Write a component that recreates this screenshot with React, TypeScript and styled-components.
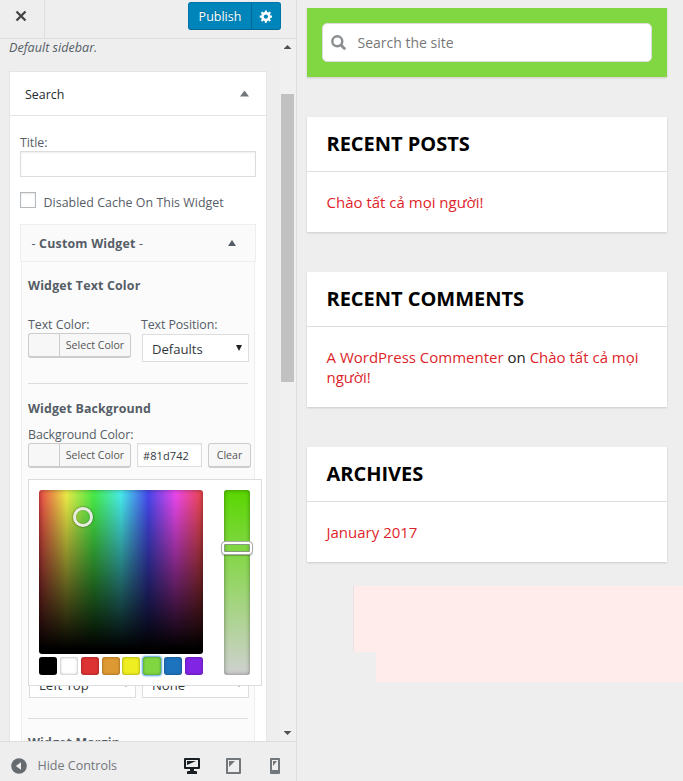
import React from 'react';
import styled, { createGlobalStyle } from 'styled-components';

const Global = createGlobalStyle`
  * { box-sizing: border-box; }
  body {
    margin: 0;
    background: #eee;
    font-family: "Open Sans", "Noto Sans", sans-serif;
    overflow: hidden;
  }
`;

const Page = styled.div`
  display: flex;
  width: 683px;
  height: 781px;
  background: #eee;
`;

const Sidebar = styled.aside`
  display: flex;
  flex-direction: column;
  flex: none;
  width: 297px;
  height: 781px;
  border-right: 1px solid #ddd;
  color: #555d66;
  font-size: 12.4px;
  line-height: 16px;
  white-space: nowrap;
`;

const TopBar = styled.header`
  display: flex;
  justify-content: space-between;
  height: 39px;
  flex: none;
  border-bottom: 1px solid #ddd;
  padding-right: 15px;
`;

const CloseButton = styled.div`
  display: flex;
  align-items: center;
  justify-content: center;
  width: 45px;
  height: 38px;
  padding: 0 3px 6px 0;
  border-right: 1px solid #ddd;
`;

const PublishGroup = styled.div`
  display: flex;
  width: 93px;
  height: 28px;
  margin-top: 2px;
  border: 1px solid #0073aa;
  border-bottom-color: #006799;
  border-radius: 3px;
  background: #0085ba;
  color: #fff;
  overflow: hidden;
`;

const PublishLabel = styled.div`
  width: 63px;
  border-right: 1px solid #006799;
  text-align: center;
  font-size: 12.5px;
  font-weight: 500;
  line-height: 27px;
  text-shadow: 0 -1px 1px #006799;
`;

const GearCell = styled.div`
  display: flex;
  flex: 1;
  align-items: center;
  justify-content: center;
  padding-top: 1px;
`;

const ScrollArea = styled.div`
  display: flex;
  flex: none;
  height: 702px;
  overflow: hidden;
`;

const Panel = styled.div`
  width: 280px;
  padding-left: 9px;
  overflow: hidden;
`;

const Description = styled.div`
  height: 16px;
  font-style: italic;
  font-size: 12.6px;
  line-height: 18px;
`;

const ScrollBar = styled.div`
  display: flex;
  flex-direction: column;
  align-items: center;
  width: 16px;
  padding: 6px 2px 6px 1px;
  background: #f0f0f0;
`;

const Thumb = styled.div`
  width: 13px;
  height: 288px;
  margin: 45px 0 auto;
  background: #c1c1c1;
`;

const WidgetCard = styled.section`
  width: 258px;
  height: 900px;
  margin-top: 16px;
  border: 1px solid #e5e5e5;
  background: #fff;
`;

const WidgetHeader = styled.div`
  display: flex;
  align-items: center;
  justify-content: space-between;
  height: 44px;
  padding: 0 17px 0 15px;
  border-bottom: 1px solid #e5e5e5;
  color: #23282d;
  font-weight: 500;
`;

const Triangle = styled.i<{ $down?: boolean; $w: number; $h: number; $color: string }>`
  flex: none;
  width: ${p => p.$w}px;
  height: ${p => p.$h}px;
  background: ${p => p.$color};
  clip-path: ${p => (p.$down ? 'polygon(0 0, 100% 0, 50% 100%)' : 'polygon(50% 0, 100% 100%, 0 100%)')};
`;

const WidgetBody = styled.div`
  padding: 18px 10px 0;
`;

const Label = styled.div<{ $ls?: number; $mt?: number; $bold?: boolean }>`
  height: 16px;
  margin-top: ${p => p.$mt ?? 0}px;
  line-height: 18px;
  letter-spacing: ${p => p.$ls ?? 0}px;
  font-weight: ${p => (p.$bold ? 700 : 400)};
`;

const HeaderLabel = styled(Label)`
  font-weight: inherit;
`;

const TitleInput = styled.div`
  height: 26px;
  margin-top: 1px;
  border: 1px solid #ddd;
  background: #fff;
  box-shadow: inset 0 1px 2px rgba(0, 0, 0, 0.07);
`;

const CheckRow = styled.div`
  display: flex;
  gap: 7.5px;
  height: 18px;
  margin-top: 15px;
`;

const Checkbox = styled.div`
  flex: none;
  width: 16px;
  height: 16px;
  border: 1px solid #b4b9be;
  background: #fff;
  box-shadow: inset 0 1px 2px rgba(0, 0, 0, 0.1);
`;

const GroupHeader = styled.div`
  display: flex;
  align-items: center;
  justify-content: space-between;
  height: 38px;
  margin-top: 14px;
  padding: 0 19px 0 10.5px;
  border: 1px solid #eee;
  background: #fafafa;
`;

const GroupBody = styled.div`
  height: 600px;
  margin: 0 1px;
  padding: 15px 6px 0;
  border: solid #eee;
  border-width: 0 1px;
  background: #fbfbfb;
`;

const Columns = styled.div<{ $mt: number }>`
  display: grid;
  grid-template-columns: 113px 108px;
  margin-top: ${p => p.$mt}px;
`;

const Rule = styled.div<{ $mt: number }>`
  width: 220px;
  height: 1px;
  margin-top: ${p => p.$mt}px;
  background: #ddd;
`;

const ButtonRow = styled.div`
  display: flex;
  gap: 6px;
  margin-top: 1px;
`;

const SmallButton = styled.div<{ $w: number }>`
  display: flex;
  flex: none;
  width: ${p => p.$w}px;
  height: 25px;
  border: 1px solid #ccc;
  border-bottom-width: 2px;
  border-radius: 3px;
  background: #f7f7f7;
  color: #555;
  font-size: 10.6px;
  line-height: 22px;
`;

const Swatch = styled.div`
  width: 31px;
  border-right: 1px solid #ccc;
`;

const ButtonText = styled.div`
  flex: 1;
  text-align: center;
`;

const HexInput = styled.div`
  flex: none;
  width: 65px;
  height: 24px;
  padding-left: 5px;
  border: 1px solid #ddd;
  background: #fff;
  box-shadow: inset 0 1px 2px rgba(0, 0, 0, 0.07);
  color: #32373c;
  font-size: 11px;
  line-height: 23px;
  letter-spacing: 0.1px;
`;

const SelectBox = styled.div`
  display: flex;
  justify-content: space-between;
  width: 107px;
  height: 28px;
  margin: 2px 0 0 1px;
  padding: 0 6px 0 9px;
  border: 1px solid #ddd;
  background: #fff;
  color: #32373c;
  font-size: 13.1px;
  line-height: 28px;
`;

const SelectArrow = styled(Triangle)`
  margin-top: 10px;
`;

const PickerAnchor = styled.div`
  position: relative;
  height: 200px;
`;

const Picker = styled.div`
  position: absolute;
  top: 11px;
  left: 0;
  display: grid;
  grid-template-columns: 164px 26px;
  column-gap: 21px;
  width: 234px;
  height: 207px;
  padding: 10px;
  border: 1px solid #ddd;
  background: #fff;
  z-index: 2;
`;

const Spectrum = styled.div`
  position: relative;
  height: 164px;
  border-radius: 3px;
  box-shadow: inset 0 0 5px rgba(0, 0, 0, 0.4);
  background:
    linear-gradient(to bottom, rgba(0, 0, 0, 0), #000 97%),
    linear-gradient(to right, #f04848, #f0f048 16.67%, #48f048 33.33%, #48f0f0 50%, #4848f0 66.67%, #f048f0 83.33%, #f04848);
`;

const Knob = styled.div`
  position: absolute;
  left: 34px;
  top: 17px;
  width: 20px;
  height: 20px;
  border: 3px solid #e8ebe2;
  border-radius: 50%;
  box-shadow: 0 0 2px rgba(0, 0, 0, 0.7), inset 0 0 1px rgba(0, 0, 0, 0.6);
`;

const Palette = styled.div`
  display: flex;
  justify-content: space-between;
  margin-top: 3px;
`;

const Chip = styled.div<{ $color: string; $active?: boolean }>`
  width: 18px;
  height: 18px;
  border-radius: 3px;
  background: ${p => p.$color};
  box-shadow: inset 0 0 3px rgba(0, 0, 0, 0.4)${p => (p.$active ? ', 0 0 2px 1px #4aa3e0' : '')};
`;

const Strip = styled.div`
  position: relative;
  height: 185px;
  border-radius: 3px;
  background: linear-gradient(to bottom, #59d600, #81d742 32%, #d0d0d0);
  box-shadow: inset 0 0 4px rgba(0, 0, 0, 0.4);
`;

const StripHandle = styled.div`
  position: absolute;
  left: -3px;
  top: 51px;
  width: 32px;
  height: 14px;
  border: 1px solid #aaa;
  border-radius: 4px;
  box-shadow: inset 0 0 0 2px #fff, inset 0 0 0 3px #8a9a80, 0 1px 1px rgba(0, 0, 0, 0.25);
`;

const Footer = styled.footer`
  display: flex;
  align-items: center;
  flex: none;
  height: 40px;
  padding: 8px 16px 0 11px;
  border-top: 1px solid #ddd;
  color: #72777c;

  svg { display: block; }
`;

const HideText = styled.div`
  flex: 1;
  margin-left: 10.5px;
  font-size: 12.5px;
`;

const Devices = styled.div`
  display: flex;
  align-items: center;
`;

const TabletSlot = styled.div`
  margin: 0 29px 0 26px;
`;

const Preview = styled.main`
  flex: 1;
  min-width: 0;
  padding: 8px 0 0 10px;
  overflow: hidden;
  color: #222;
`;

const SearchWidget = styled.div`
  width: 360px;
  height: 69px;
  padding: 15px;
  background: #81d742;
  box-shadow: 0 1px 2px rgba(0, 0, 0, 0.15);
`;

const SearchField = styled.div`
  display: flex;
  align-items: center;
  gap: 11.5px;
  height: 39px;
  padding-left: 8px;
  border: 1px solid #ddd;
  border-radius: 5px;
  background: #fff;
  color: #777;
  font-size: 14px;
`;

const Card = styled.section`
  width: 360px;
  margin-top: 40px;
  background: #fff;
  box-shadow: 0 1px 2px rgba(0, 0, 0, 0.15);
`;

const CardTitle = styled.h3`
  height: 55px;
  margin: 0;
  padding: 0 20px 0 19.5px;
  border-bottom: 1px solid #ddd;
  color: #000;
  font-size: 20px;
  font-weight: 700;
  line-height: 54px;
  letter-spacing: -0.02px;
`;

const CardBody = styled.div`
  padding: 20px 20px 20px 19.5px;
  font-size: 15px;
  line-height: 20px;
`;

const Link = styled.span`
  color: #dd1f2b;
`;

const PinkTop = styled.div`
  height: 66px;
  margin: 24px 0 0 46px;
  border-left: 1px solid #e8e2e2;
  background: #ffeceb;
`;

const PinkBottom = styled.div`
  height: 30px;
  margin-left: 69px;
  background: #ffeceb;
`;

const SWATCHES = ['#000', '#fff', '#dd3333', '#dd9933', '#eeee22', '#81d742', '#1e73be', '#8224e3'];

const GEAR =
  'M18 12h-2.18c-.17.7-.44 1.35-.81 1.93l1.54 1.54-2.1 2.1-1.54-1.54c-.58.36-1.23.63-1.91.79V19H8v-2.18c-.68-.16-1.33-.43-1.91-.79l-1.54 1.54-2.12-2.12 1.54-1.54c-.36-.58-.63-1.23-.79-1.91H1V9.03h2.17c.16-.7.44-1.35.8-1.94L2.43 5.55l2.1-2.1 1.54 1.54c.58-.37 1.24-.64 1.93-.81V2h3v2.18c.68.16 1.33.43 1.91.79l1.54-1.54 2.12 2.12-1.54 1.54c.36.59.64 1.24.8 1.94H18V12zm-8.5 1.5c1.66 0 3-1.34 3-3s-1.34-3-3-3-3 1.34-3 3 1.34 3 3 3z';

const Dropdown = ({ value }: { value: string }) => (
  <SelectBox>
    {value}
    <SelectArrow $down $w={6} $h={6} $color="#222" />
  </SelectBox>
);

const ColorButton = () => (
  <SmallButton $w={103}>
    <Swatch />
    <ButtonText>Select Color</ButtonText>
  </SmallButton>
);

const ColorPicker = () => (
  <Picker>
    <div>
      <Spectrum>
        <Knob />
      </Spectrum>
      <Palette>
        {SWATCHES.map(c => (
          <Chip key={c} $color={c} $active={c === '#81d742'} />
        ))}
      </Palette>
    </div>
    <Strip>
      <StripHandle />
    </Strip>
  </Picker>
);

export default function App() {
  return (
    <Page>
      <Global />
      <Sidebar>
        <TopBar>
          <CloseButton>
            <svg width="12" height="12" viewBox="0 0 12 12">
              <path d="M1.5 1.5l9 9M10.5 1.5l-9 9" stroke="#444" strokeWidth="2.3" />
            </svg>
          </CloseButton>
          <PublishGroup>
            <PublishLabel>Publish</PublishLabel>
            <GearCell>
              <svg width="14.5" height="14.5" viewBox="0 0 20 20" fill="#fff">
                <path d={GEAR} />
              </svg>
            </GearCell>
          </PublishGroup>
        </TopBar>
        <ScrollArea>
          <Panel>
            <Description>Default sidebar.</Description>
            <WidgetCard>
              <WidgetHeader>
                <HeaderLabel>Search</HeaderLabel>
                <Triangle $w={9} $h={6} $color="#72777c" />
              </WidgetHeader>
              <WidgetBody>
                <Label $ls={-0.05}>Title:</Label>
                <TitleInput />
                <CheckRow>
                  <Checkbox />
                  <Label $mt={2} $ls={0.04}>Disabled Cache On This Widget</Label>
                </CheckRow>
                <GroupHeader>
                  <Label $ls={0.2}>
                    - <b>Custom Widget</b> -
                  </Label>
                  <Triangle $w={8} $h={6} $color="#555d66" />
                </GroupHeader>
                <GroupBody>
                  <Label $bold $ls={0.18}>Widget Text Color</Label>
                  <Columns $mt={23}>
                    <div>
                      <Label $ls={-0.05}>Text Color:</Label>
                      <ButtonRow>
                        <ColorButton />
                      </ButtonRow>
                    </div>
                    <div>
                      <Label $ls={-0.1}>Text Position:</Label>
                      <Dropdown value="Defaults" />
                    </div>
                  </Columns>
                  <Rule $mt={21} />
                  <Label $bold $ls={0.13} $mt={16}>Widget Background</Label>
                  <Label $mt={10} $ls={-0.08}>Background Color:</Label>
                  <ButtonRow>
                    <ColorButton />
                    <HexInput>#81d742</HexInput>
                    <SmallButton $w={43}>
                      <ButtonText>Clear</ButtonText>
                    </SmallButton>
                  </ButtonRow>
                  <PickerAnchor>
                    <ColorPicker />
                  </PickerAnchor>
                  <Columns $mt={0}>
                    <Dropdown value="Left Top" />
                    <Dropdown value="None" />
                  </Columns>
                  <Rule $mt={20} />
                  <Label $bold $ls={0.13} $mt={15}>Widget Margin</Label>
                </GroupBody>
              </WidgetBody>
            </WidgetCard>
          </Panel>
          <ScrollBar>
            <Triangle $w={8} $h={4} $color="#505050" />
            <Thumb />
            <Triangle $down $w={8} $h={4} $color="#505050" />
          </ScrollBar>
        </ScrollArea>
        <Footer>
          <svg width="16" height="16" viewBox="0 0 16 16">
            <circle cx="8" cy="8" r="7.8" fill="#666b70" />
            <path d="M10 4.3v7.4L4.8 8z" fill="#eee" />
          </svg>
          <HideText>Hide Controls</HideText>
          <Devices>
            <svg width="16" height="16" viewBox="0 0 16 16">
              <path
                fill="#191e23"
                fillRule="evenodd"
                d="M1 0h14a1 1 0 0 1 1 1v9a1 1 0 0 1-1 1H10v2h2a1 1 0 0 1 1 1v2H3v-2a1 1 0 0 1 1-1h2v-2H1a1 1 0 0 1-1-1V1a1 1 0 0 1 1-1zM2 2v7h12V2z"
              />
              <path fill="#191e23" d="M3 3h9L3 7z" />
            </svg>
            <TabletSlot>
              <svg width="15" height="16" viewBox="0 0 15 16">
                <path
                  fill="#72777c"
                  fillRule="evenodd"
                  d="M1 0h13a1 1 0 0 1 1 1v14a1 1 0 0 1-1 1H1a1 1 0 0 1-1-1V1a1 1 0 0 1 1-1zM2 2v12h11V2z"
                />
                <path fill="#72777c" d="M3 3h6L3 9z" />
              </svg>
            </TabletSlot>
            <svg width="10" height="16" viewBox="0 0 10 16">
              <path
                fill="#72777c"
                fillRule="evenodd"
                d="M1 0h8a1 1 0 0 1 1 1v14a1 1 0 0 1-1 1H1a1 1 0 0 1-1-1V1a1 1 0 0 1 1-1zM2 2v10h6V2z"
              />
              <path fill="#72777c" d="M3 3h4L3 8z" />
            </svg>
          </Devices>
        </Footer>
      </Sidebar>
      <Preview>
        <SearchWidget>
          <SearchField>
            <svg width="15" height="15" viewBox="0 0 15 15">
              <circle cx="6.3" cy="6.3" r="5" fill="none" stroke="#8b8e90" strokeWidth="2.4" />
              <path d="M10 10l3.4 3.4" stroke="#8b8e90" strokeWidth="2.8" strokeLinecap="round" />
            </svg>
            Search the site
          </SearchField>
        </SearchWidget>
        <Card>
          <CardTitle>RECENT POSTS</CardTitle>
          <CardBody>
            <Link>Chào tất cả mọi người!</Link>
          </CardBody>
        </Card>
        <Card>
          <CardTitle>RECENT COMMENTS</CardTitle>
          <CardBody>
            <Link>A WordPress Commenter</Link> on <Link>Chào tất cả mọi người!</Link>
          </CardBody>
        </Card>
        <Card>
          <CardTitle>ARCHIVES</CardTitle>
          <CardBody>
            <Link>January 2017</Link>
          </CardBody>
        </Card>
        <PinkTop />
        <PinkBottom />
      </Preview>
    </Page>
  );
}
